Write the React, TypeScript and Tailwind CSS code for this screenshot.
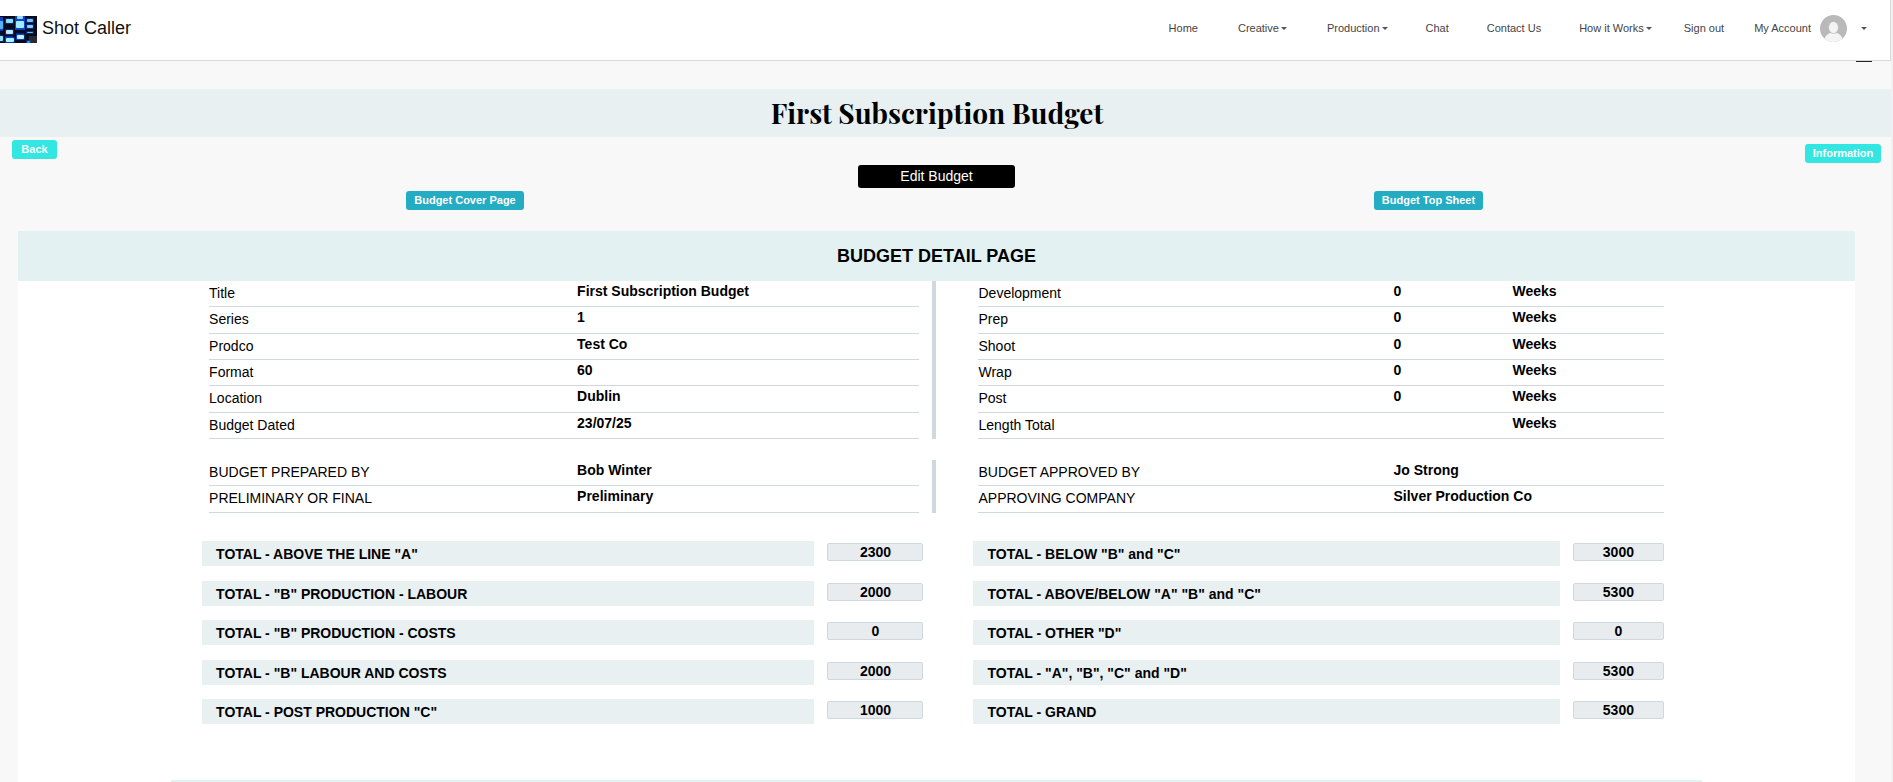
import React from "react";

type NavItem = { label: string; menu?: boolean; gap: string };

const navItems: NavItem[] = [
  { label: "Home", gap: "mr-10" },
  { label: "Creative", menu: true, gap: "mr-10" },
  { label: "Production", menu: true, gap: "mr-[38px]" },
  { label: "Chat", gap: "mr-[38px]" },
  { label: "Contact Us", gap: "mr-[38px]" },
  { label: "How it Works", menu: true, gap: "mr-8" },
  { label: "Sign out", gap: "mr-[30px]" },
];

const details: [string, string][] = [
  ["Title", "First Subscription Budget"],
  ["Series", "1"],
  ["Prodco", "Test Co"],
  ["Format", "60"],
  ["Location", "Dublin"],
  ["Budget Dated", "23/07/25"],
];

const schedule: [string, string][] = [
  ["Development", "0"],
  ["Prep", "0"],
  ["Shoot", "0"],
  ["Wrap", "0"],
  ["Post", "0"],
  ["Length Total", ""],
];

const prepared: [string, string][] = [
  ["BUDGET PREPARED BY", "Bob Winter"],
  ["PRELIMINARY OR FINAL", "Preliminary"],
];

const approved: [string, string][] = [
  ["BUDGET APPROVED BY", "Jo Strong"],
  ["APPROVING COMPANY", "Silver Production Co"],
];

const totalsLeft: [string, string][] = [
  ['TOTAL - ABOVE THE LINE "A"', "2300"],
  ['TOTAL - "B" PRODUCTION - LABOUR', "2000"],
  ['TOTAL - "B" PRODUCTION - COSTS', "0"],
  ['TOTAL - "B" LABOUR AND COSTS', "2000"],
  ['TOTAL - POST PRODUCTION "C"', "1000"],
];

const totalsRight: [string, string][] = [
  ['TOTAL - BELOW "B" and "C"', "3000"],
  ['TOTAL - ABOVE/BELOW "A" "B" and "C"', "5300"],
  ['TOTAL - OTHER "D"', "0"],
  ['TOTAL - "A", "B", "C" and "D"', "5300"],
  ["TOTAL - GRAND", "5300"],
];

function Caret() {
  return (
    <svg width="6" height="3" viewBox="0 0 6 3" aria-hidden="true">
      <path d="M0 0h6L3 3z" fill="#555" />
    </svg>
  );
}

function Logo() {
  const tiles: [number, number, number, number, string][] = [
    [-2, 5, 5, 8, "#58b4f8"],
    [-2, 20, 5, 5, "#8fe0ff"],
    [6, 3, 7, 4, "#8fdcff"],
    [6, 14, 7, 4, "#c4e4ff"],
    [6, 22, 8, 4, "#a9f0ff"],
    [17, 0, 6, 3, "#9fdcf8"],
    [16, 5, 8, 7, "#9fecff"],
    [17, 19, 7, 4, "#c8ecff"],
    [27, 3, 6, 3, "#7fbcf4"],
    [27, 9, 6, 3, "#8cc8fa"],
    [27, 16, 6, 1, "#5fc0e8"],
    [27, 25, 3, 2, "#2f9cf0"],
  ];
  return (
    <svg width="37" height="27" viewBox="0 0 37 27" aria-hidden="true">
      <defs>
        <filter id="glow" x="-20%" y="-20%" width="140%" height="140%">
          <feGaussianBlur stdDeviation="0.7" />
        </filter>
      </defs>
      <rect width="37" height="27" fill="#070b1c" />
      <g filter="url(#glow)">
        <path d="M0 1h3v14H0zM15 0h10v14H15z" fill="#0a3fc4" />
        <path d="M5 20h8v7H5zM16 17h8v7h-8z" fill="#06289a" />
        <path d="M29 20h9v8h-9z" fill="#2b2b31" />
        {tiles.map(([x, y, w, h, fill]) => (
          <React.Fragment key={`${x}-${y}`}>
            <rect x={x - 1} y={y - 1} width={w + 2} height={h + 2} rx="1" fill="#0c4fd0" opacity="0.5" />
            <rect x={x} y={y} width={w} height={h} rx="1" fill={fill} />
          </React.Fragment>
        ))}
      </g>
    </svg>
  );
}

function Avatar() {
  return (
    <svg width="27" height="27" viewBox="0 0 27 27" aria-hidden="true">
      <defs>
        <clipPath id="avatar-clip">
          <circle cx="13.5" cy="13.5" r="13.5" />
        </clipPath>
      </defs>
      <g clipPath="url(#avatar-clip)">
        <rect width="27" height="27" fill="#b9b9b9" />
        <path d="M4 27c0-5 3-8 6-9h7c3 1 6 4 6 9z" fill="#f4f4f4" />
        <ellipse cx="13.5" cy="12.5" rx="5" ry="6" fill="#f4f4f4" stroke="#b9b9b9" strokeWidth="0.8" />
      </g>
    </svg>
  );
}

function DetailTable({ rows, wide, unit }: { rows: [string, string][]; wide?: boolean; unit?: string }) {
  return (
    <table className={`w-full table-fixed border-collapse text-left text-sm leading-5 ${rows.length > 2 ? "h-[158px]" : "h-[53px]"}`}>
      <colgroup>
        <col className={wide ? "w-[415px]" : "w-[368px]"} />
        {unit && <col className="w-[119px]" />}
        <col />
      </colgroup>
      <tbody>
        {rows.map(([label, value]) => (
          <tr key={label} className="border-b border-[#cfd8dc]">
            <th scope="row" className="p-0 pt-[2px] align-top font-normal">{label}</th>
            <td className="p-0 align-top font-bold">{value}</td>
            {unit && <td className="p-0 align-top font-bold">{unit}</td>}
          </tr>
        ))}
      </tbody>
    </table>
  );
}

function Totals({ rows, side }: { rows: [string, string][]; side: string }) {
  return (
    <div className="flex h-[183px] flex-col justify-between">
      {rows.map(([label, value], i) => (
        <div key={label} className="flex items-start">
          <label htmlFor={`${side}-${i}`} className="h-[25px] flex-1 bg-[#e8f0f2] px-[14px] pt-[3px] text-sm leading-5 font-bold">
            {label}
          </label>
          <input
            id={`${side}-${i}`}
            readOnly
            value={value}
            className={`mt-[2px] ml-[13px] h-[18px] rounded-xs border border-[#cfd8dc] bg-[#e9ecef] p-0 text-center text-sm font-bold ${side === "left" ? "w-24" : "w-[91px]"}`}
          />
        </div>
      ))}
    </div>
  );
}

const smallButton = "h-[19px] rounded-[3px] text-[11px] leading-[19px] font-bold text-white";

export default function App() {
  return (
    <div className="min-h-screen bg-[#f1f1f1] pr-[2px] font-['Liberation_Sans',Arial,sans-serif] text-black">
      <div className="flex min-h-screen flex-col bg-[#f8f8f8]">
        <header className="flex h-[61px] items-start justify-between border-r border-b border-[#d9d9d9] bg-white">
          <a href="#" className="mt-4 flex items-start gap-[5px] text-[18px] leading-6 text-[#111]">
            <Logo />
            Shot Caller
          </a>
          <nav className="mt-[14px] mr-[23px] flex h-7 items-center text-[11px] whitespace-nowrap text-[#444]">
            {navItems.map((item) =>
              item.menu ? (
                <button key={item.label} type="button" className={`flex items-center gap-[2px] ${item.gap}`}>
                  {item.label}
                  <Caret />
                </button>
              ) : (
                <a key={item.label} href="#" className={item.gap}>
                  {item.label}
                </a>
              ),
            )}
            <button type="button" className="flex items-center">
              My Account
              <span className="mr-[14px] ml-[9px]">
                <Avatar />
              </span>
              <Caret />
            </button>
          </nav>
        </header>
        <div className="mr-[19px] h-px w-4 self-end bg-[#222]" />

        <h1 className="mt-[27px] h-12 bg-[#e8f0f2] pr-[17px] text-center font-['Playfair_Display','Liberation_Serif',serif] text-[28px] leading-[48px] font-bold">
          First Subscription Budget
        </h1>

        <div className="flex items-start justify-between pt-[3px] pr-[10px] pl-3">
          <button type="button" className={`${smallButton} w-[45px] bg-[#33e6e1]`}>Back</button>
          <button type="button" className={`${smallButton} mt-1 w-[76px] bg-[#33e6e1]`}>Information</button>
        </div>
        <div className="mt-[2px] flex justify-center pr-[18px]">
          <button type="button" className="h-[23px] w-[157px] rounded-[3px] bg-black text-sm leading-[23px] text-white">
            Edit Budget
          </button>
        </div>
        <div className="mt-[3px] flex justify-between pr-[408px] pl-[406px]">
          <button type="button" className={`${smallButton} w-[118px] bg-[#24acc3]`}>Budget Cover Page</button>
          <button type="button" className={`${smallButton} w-[109px] bg-[#24acc3]`}>Budget Top Sheet</button>
        </div>

        <main className="mt-[21px] mr-9 ml-[18px] grow bg-white">
          <h2 className="h-[50px] bg-[#e3f1f3] text-center text-[18px] leading-[50px] font-bold">BUDGET DETAIL PAGE</h2>
          <div className="mx-auto w-5/6">
            <div className="grid grid-cols-2">
              <div className="border-r-4 border-[#cfd8dc] pr-[13px] pl-[38px]">
                <DetailTable rows={details} />
              </div>
              <div className="pr-[38px] pl-[42px]">
                <DetailTable rows={schedule} wide unit="Weeks" />
              </div>
            </div>
            <div className="mt-[21px] grid grid-cols-2">
              <div className="border-r-4 border-[#cfd8dc] pr-[13px] pl-[38px]">
                <DetailTable rows={prepared} />
              </div>
              <div className="pr-[38px] pl-[42px]">
                <DetailTable rows={approved} wide />
              </div>
            </div>
            <div className="mt-7 grid grid-cols-2">
              <div className="pr-[13px] pl-[31px]">
                <Totals rows={totalsLeft} side="left" />
              </div>
              <div className="pr-[38px] pl-[37px]">
                <Totals rows={totalsRight} side="right" />
              </div>
            </div>
            <div className="mt-14 h-[2px] bg-[#e3f1f3]" />
          </div>
        </main>
      </div>
    </div>
  );
}
